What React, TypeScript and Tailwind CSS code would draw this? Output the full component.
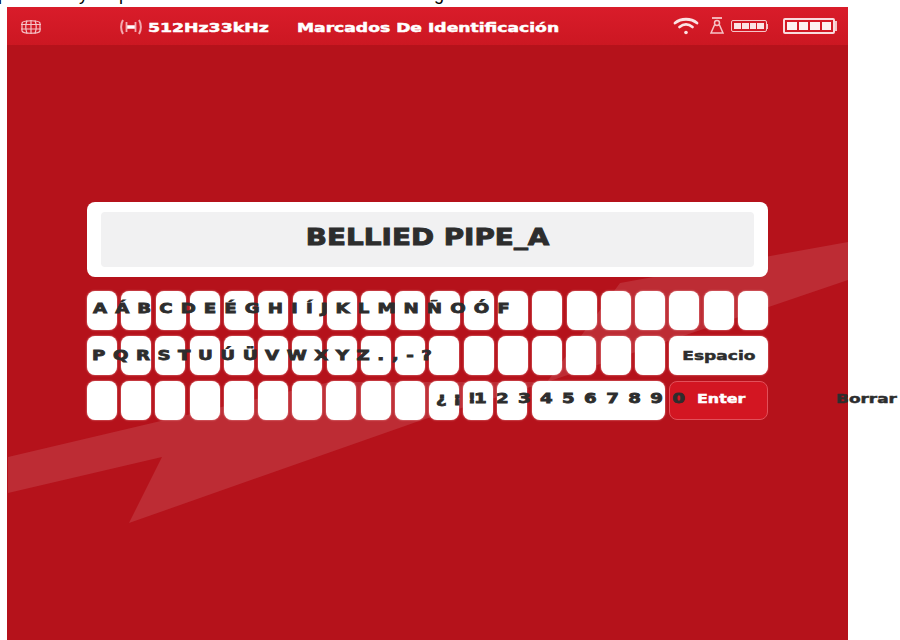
import React from 'react';

const FONT = "font-['DejaVu_Sans',sans-serif] font-bold";

// --- Icons ---
const AntennaIcon = () => (
    <svg width="22" height="18" viewBox="0 0 22 18" fill="none" stroke="#f6c3c7" strokeWidth="1.2">
        <path d="M2 5c1-3 17-3 18 0v8c-1 3-17 3-18 0z" />
        <path d="M7 2.500c-1.500 4-1.500 9 0 13M15 2.500c1.500 4 1.500 9 0 13M11 2v14M1 6.500h20M1 11h20" />
    </svg>
);
const FrequencyIcon = () => (
    <svg width="24" height="18" viewBox="0 0 24 18" fill="none" stroke="#f3aab0">
        <path d="M4 2C1.500 6 1.500 12 4 16M20 2c2.500 4 2.500 10 0 14" strokeWidth="2" />
        <path d="M7 9h10" stroke="#fff" strokeWidth="3.500" />
        <path d="M7.500 4v10M16.500 4v10" strokeWidth="1.800" />
    </svg>
);
const WifiIcon = () => (
    <svg width="26" height="20" viewBox="0 0 26 20" fill="none" stroke="#fbe3e4" strokeWidth="2.800" strokeLinecap="round">
        <path d="M2 7c6-5 16-5 22 0" />
        <path d="M6.500 11c4-3.200 9-3.200 13 0" />
        <circle cx="13" cy="16.500" r="1.800" fill="#fbe3e4" stroke="none" />
    </svg>
);
const WeightIcon = () => (
    <svg width="16" height="18" viewBox="0 0 16 18" fill="none" stroke="#f6c3c7" strokeWidth="1.500">
        <path d="M3 1h10" strokeWidth="1.800" />
        <circle cx="8" cy="6" r="2.500" />
        <path d="M5.500 8 2 16h12l-3.500-8" />
    </svg>
);
const Battery = ({ small }: { small?: boolean }) => (
    <div className="flex items-center">
        <div className={small ? 'flex gap-[1px] p-[2px] w-[36px] h-[12px] border-[1.500px] border-[#f6c3c7] rounded-[2px]' : 'flex gap-[2px] p-[2px] w-[52px] h-[16px] border-2 border-[#f9dcde] rounded-[2px]'}>
            {[0, 1, 2, 3].map(i => (
                <div key={i} className={small ? 'flex-1 bg-[#fbe3e4]' : 'flex-1 bg-[#fdf1f1]'}></div>
            ))}
        </div>
        <div className={small ? 'w-[1px] h-[5px] bg-[#f6c3c7]' : 'w-[2px] h-[10px] bg-[#f6c3c7]'}></div>
    </div>
);
// --- End Icons ---

const KEY_FACE = 'h-[39px] rounded-[8px] shrink-0 shadow-[0_0_2px_rgba(255,205,205,0.8)]';

const Key = ({ wide }: { wide?: boolean }) => (
    <div className={`${KEY_FACE} bg-white ${wide ? 'w-[133px]' : 'w-[30px]'}`}></div>
);

const KeyLabels = ({ text, className }: { text: string; className: string }) => (
    <span className={`absolute origin-left scale-x-[1.3] whitespace-pre text-[14px] leading-[20px] text-[#2d2d2d] [-webkit-text-stroke:0.8px_#2d2d2d] ${FONT} ${className}`}>{text}</span>
);

export default function App(): React.ReactElement {
    return (
        <div className="w-[900px] h-[640px] bg-white overflow-hidden flex flex-col">
            {/* caption cut off by the top of the picture */}
            <div className="h-[7px] overflow-hidden flex items-start text-[18px] leading-none text-black font-['Liberation_Sans',sans-serif]">
                <span className="-mt-[15px] -ml-[2px]">p</span>
                <span className="-mt-[15px] ml-[71px]">y</span>
                <span className="-mt-[15px] ml-[31px]">p</span>
                <span className="-mt-[15px] ml-[305px]">g</span>
            </div>

            <div className="relative ml-[7px] w-[841px] flex-1 bg-[#b5121b] flex flex-col">
                <svg className="absolute left-0 top-0 w-full h-full" viewBox="0 0 841 633" fill="none">
                    <path d="M841 235 613 276 540 375 323 375 158 413 1 450V486L155 450 122 516 415 413 540 375 673 330 841 273Z" fill="#ffffff" fillOpacity="0.11" />
                </svg>

                <header className={`relative h-[38px] shrink-0 bg-gradient-to-b from-[#d91c2a] to-[#cc1722] flex items-center text-white text-[13px] [-webkit-text-stroke:0.5px_#ffffff] ${FONT}`}>
                    <div className="ml-[13px] mt-[2px]"><AntennaIcon /></div>
                    <div className="ml-[77px] mt-[2px]"><FrequencyIcon /></div>
                    <span className="ml-[5px] mt-[3px] w-[149px] origin-left scale-x-[1.33]">512Hz33kHz</span>
                    <span className="mt-[3px] origin-left scale-x-[1.32] whitespace-pre">Marcados De Identificación</span>
                    <div className="ml-auto flex items-center">
                        <WifiIcon />
                        <div className="ml-[10px]"><WeightIcon /></div>
                        <div className="ml-[6px]"><Battery small /></div>
                        <div className="ml-[15px] mr-[11px]"><Battery /></div>
                    </div>
                </header>

                <main className="relative ml-[80px] mt-[157px] w-[681px] flex flex-col">
                    <div className="h-[75px] rounded-[8px] bg-white py-[10px] px-[14px]">
                        <div className={`h-full rounded-[4px] bg-[#f1f1f2] flex items-center justify-center pb-[4px] text-[23px] text-[#2d2d2d] [-webkit-text-stroke:0.9px_#2d2d2d] ${FONT}`}>
                            <span className="scale-x-[1.21]">BELLIED PIPE_A</span>
                        </div>
                    </div>

                    <div className="mt-[14px] flex flex-col gap-[6px]">
                        <div className="relative flex justify-between">
                            {Array.from({ length: 20 }).map((_, i) => <Key key={i} />)}
                            <KeyLabels text="AÁBCDEÉGHIÍJKLMNÑOÓF" className="left-[6px] top-[7px] tracking-[6.200px]" />
                        </div>
                        <div className="relative flex justify-between">
                            {Array.from({ length: 17 }).map((_, i) => <Key key={i} />)}
                            <div className={`${KEY_FACE} w-[99px] bg-white flex items-center justify-center text-[13px] text-[#2d2d2d] [-webkit-text-stroke:0.5px_#2d2d2d] ${FONT}`}>
                                <span className="scale-x-[1.31]">Espacio</span>
                            </div>
                            <KeyLabels text="PQRSTUÚÜVWXYZ.,-?" className="left-[5px] top-[9px] tracking-[5.800px]" />
                        </div>
                        <div className="relative flex justify-between">
                            {Array.from({ length: 13 }).map((_, i) => <Key key={i} />)}
                            <Key wide />
                            <div className={`w-[99px] h-[39px] rounded-[8px] bg-[#d31622] border border-[#e2505a] flex items-center pl-[27px] pb-[3px] text-[13px] text-white [-webkit-text-stroke:0.5px_#ffffff] ${FONT}`}>
                                <span className="origin-left scale-x-[1.22]">Enter</span>
                            </div>
                            <KeyLabels text="¿¡!" className="left-[349px] top-[7px] tracking-[5px]" />
                            <KeyLabels text="1234567890" className="left-[387px] top-[7px] tracking-[7.200px]" />
                            <span className={`absolute left-[749px] top-[8px] origin-left scale-x-[1.3] text-[13px] text-[#2d2d2d] [-webkit-text-stroke:0.5px_#2d2d2d] ${FONT}`}>Borrar</span>
                        </div>
                    </div>
                </main>
            </div>
        </div>
    );
}
